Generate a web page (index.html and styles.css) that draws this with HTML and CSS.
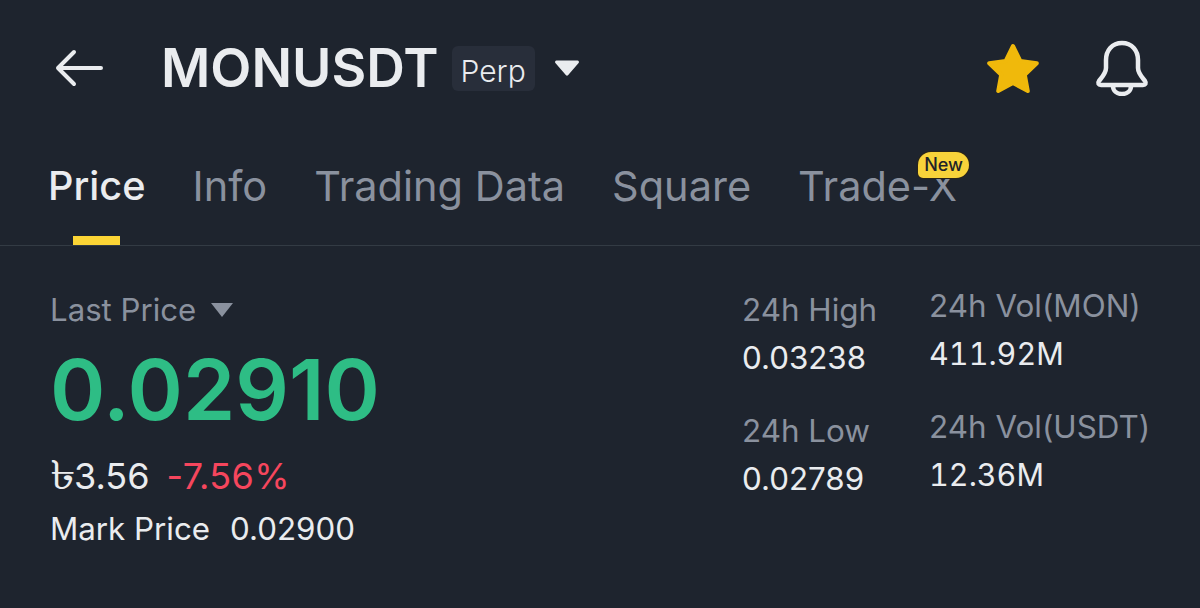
FILE: index.html
```html
<!DOCTYPE html>
<html lang="en">

<head>
    <meta charset="UTF-8">
    <meta name="viewport" content="width=device-width, initial-scale=1.0">
    <title>MONUSDT Perp</title>
    <link rel="stylesheet" href="styles.css">
</head>

<body>
    <header class="topbar">
        <svg class="back-icon" viewBox="0 0 48 38" fill="none" stroke="#eaecef" stroke-width="4" stroke-linecap="round" stroke-linejoin="round">
            <path d="M46 19H3M19 3L3 19l16 16" />
        </svg>
        <h1 class="symbol">MONUSDT</h1>
        <span class="perp-tag">Perp</span>
        <svg class="caret-icon" viewBox="0 0 26 18">
            <path d="M2.5 1.500h21a1.500 1.500 0 0 1 1.100 2.500L14.200 16a1.600 1.600 0 0 1-2.400 0L1.400 4a1.500 1.500 0 0 1 1.100-2.500z" fill="#eaecef" />
        </svg>
        <div class="topbar-actions">
            <svg class="star-icon" viewBox="0 0 54 52">
                <path d="M27 4l7.300 15 16.500 2.200-12 11.500 3 16.300L27 41l-14.800 8 3-16.300-12-11.500 16.500-2.200z" fill="#f0b90b" stroke="#f0b90b" stroke-width="4" stroke-linejoin="round" />
            </svg>
            <svg class="bell-icon" viewBox="0 0 54 56" fill="none" stroke="#eaecef" stroke-width="4.500" stroke-linecap="round" stroke-linejoin="round">
                <path d="M27 3c-10 0-16 7.500-16 17v8c0 5-3 8-7 13-1.500 2-.5 4 2 4h42c2.500 0 3.500-2 2-4-4-5-7-8-7-13v-8c0-9.500-6-17-16-17z" />
                <path d="M18 46c0 5 4 8 9 8s9-3 9-8" />
            </svg>
        </div>
    </header>

    <nav class="tabs">
        <a class="tab tab-active">Price</a>
        <a class="tab">Info</a>
        <a class="tab">Trading Data</a>
        <a class="tab">Square</a>
        <a class="tab tab-new">Trade-X<span class="new-badge">New</span></a>
    </nav>

    <main class="market">
        <section class="price-block">
            <div class="last-price">Last Price <span class="small-caret"></span></div>
            <div class="price">0.02910</div>
            <div class="change-row">
                <span class="fiat"><span class="taka">৳</span>3.56</span>
                <span class="change">-7.56%</span>
            </div>
            <div class="mark-row">
                <span>Mark Price</span>
                <span>0.02900</span>
            </div>
        </section>

        <section class="stats">
            <div class="stat-col stat-col-left">
                <div class="stat">
                    <div class="stat-label">24h High</div>
                    <div class="stat-value">0.03238</div>
                </div>
                <div class="stat">
                    <div class="stat-label">24h Low</div>
                    <div class="stat-value">0.02789</div>
                </div>
            </div>
            <div class="stat-col stat-col-right">
                <div class="stat">
                    <div class="stat-label">24h Vol(MON)</div>
                    <div class="stat-value">411.92M</div>
                </div>
                <div class="stat">
                    <div class="stat-label">24h Vol(USDT)</div>
                    <div class="stat-value">12.36M</div>
                </div>
            </div>
        </section>
    </main>
</body>

</html>
```

FILE: styles.css
```css
body {
    margin: 0;
    height: 608px;
    overflow: hidden;
    background: #1e242e;
    color: #eaecef;
    font-family: Inter, "Noto Sans", sans-serif;
}

.topbar {
    display: flex;
    align-items: center;
    height: 136px;
    padding: 0 51px 0 55px;
    box-sizing: border-box;
}

.back-icon {
    width: 48px;
    height: 38px;
    margin-right: 58px;
}

.symbol {
    margin: 0;
    font-size: 53.500px;
    font-weight: 600;
    line-height: 1;
}

.perp-tag {
    margin-left: 13px;
    padding: 0 9px;
    height: 45px;
    line-height: 50px;
    border-radius: 6px;
    background: #282e3a;
    font-size: 30px;
    font-weight: 300;
}

.caret-icon {
    width: 26px;
    height: 18px;
    margin-left: 19px;
}

.topbar-actions {
    display: flex;
    align-items: center;
    gap: 55px;
    margin-left: auto;
}

.star-icon {
    width: 54px;
    height: 52px;
}

.bell-icon {
    width: 54px;
    height: 56px;
}

.tabs {
    display: flex;
    gap: 47px;
    height: 109px;
    padding-left: 48px;
    border-bottom: 1px solid #333b44;
}

.tab {
    position: relative;
    padding-top: 28px;
    font-size: 41.500px;
    line-height: 45px;
    color: #8a919e;
}

.tab-active {
    color: #eaecef;
    font-weight: 500;
    font-size: 39.700px;
}

/* short yellow bar under the selected tab */
.tab-active::after {
    content: "";
    position: absolute;
    left: 25px;
    bottom: 0;
    width: 47px;
    height: 9px;
    background: #fcd535;
}

.new-badge {
    position: absolute;
    right: -12px;
    top: 16px;
    padding: 0 6px;
    height: 26px;
    line-height: 26px;
    border-radius: 13px 13px 13px 5px;
    background: #f8d33a;
    box-shadow: 0 0 0 1px #2a2418;
    color: #1e2329;
    font-size: 18px;
    font-weight: 500;
}

.market {
    display: flex;
    justify-content: space-between;
    padding: 40px 50px 0;
}

.price-block {
    padding-top: 6px;
}

.last-price {
    display: flex;
    align-items: center;
    gap: 15px;
    font-size: 31.200px;
    line-height: 36px;
    color: #8a919e;
}

.small-caret {
    border-left: 11px solid transparent;
    border-right: 11px solid transparent;
    border-top: 14px solid #8a919e;
}

.price {
    margin-top: 17px;
    font-size: 84px;
    font-weight: 600;
    line-height: 90px;
    color: #2ebd85;
}

.change-row {
    display: flex;
    gap: 17px;
    margin-top: 19px;
    font-size: 36px;
    line-height: 44px;
}

/* the fallback taka glyph is narrow, stretch it a bit */
.taka {
    display: inline-block;
    margin-right: 4px;
    font-family: "DejaVu Sans", "Noto Sans", sans-serif;
    font-size: 40px;
    line-height: 1;
    transform: scaleX(1.3);
    transform-origin: left;
}

.change {
    color: #f6465d;
    letter-spacing: .4px;
}

.mark-row {
    display: flex;
    gap: 20px;
    margin-top: 11px;
    font-size: 31.300px;
    line-height: 40px;
}

.stats {
    display: flex;
    flex-shrink: 0;
    gap: 52px;
    width: 408px;
    white-space: nowrap;
}

.stat {
    margin-bottom: 33px;
}

.stat-col-left {
    padding-top: 4px;
}

.stat-label {
    font-size: 31.400px;
    line-height: 40px;
    color: #8a919e;
}

.stat-value {
    margin-top: 8px;
    font-size: 31.300px;
    line-height: 40px;
}

.stat-col-right .stat-value {
    font-size: 30.500px;
    font-feature-settings: "tnum";
}
```
